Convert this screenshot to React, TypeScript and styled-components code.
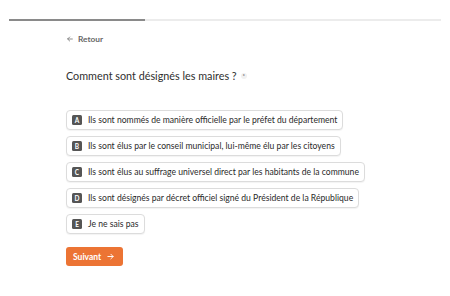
import React from "react";
import styled, { createGlobalStyle } from "styled-components";

const Global = createGlobalStyle`
  html, body { margin: 0; padding: 0; background: #fff; }
  body { font-family: Lato, "Open Sans", sans-serif; color: #333; }
`;

const Page = styled.div`
  width: 450px;
  height: 296px;
  padding-top: 19px;
  box-sizing: border-box;
`;

const Track = styled.div`
  margin: 0 9px;
  height: 2px;
  background: #ececec;
  display: flex;
`;

const Fill = styled.div`
  height: 100%;
  background: #8a8a8a;
`;

const Content = styled.div`
  padding-left: 66px;
  display: flex;
  flex-direction: column;
  align-items: flex-start;
`;

const Back = styled.div`
  margin-top: 13px;
  display: flex;
  align-items: center;
  gap: 4px;
  font-size: 8.3px;
  font-weight: 700;
  color: #666;
`;

const Question = styled.div`
  margin-top: 25px;
  font-size: 10.8px;
  color: #2f2f2f;
  display: flex;
  align-items: center;
  gap: 4px;
`;

const Required = styled.span`
  width: 6px;
  height: 6px;
  border-radius: 50%;
  background: #f1f1f1;
  display: inline-flex;
  align-items: center;
  justify-content: center;
  font-size: 6px;
  line-height: 1;
  color: #333;
`;

const Options = styled.div`
  margin-top: 28px;
  display: flex;
  flex-direction: column;
  align-items: flex-start;
  gap: 6px;
`;

const Option = styled.div`
  height: 20px;
  box-sizing: border-box;
  border: 1px solid #dcdcdc;
  border-radius: 4px;
  box-shadow: 0 1px 1px rgba(0, 0, 0, 0.05);
  display: flex;
  align-items: center;
  padding: 0 5px 0 5px;
  gap: 6px;
  font-size: 8.6px;
  color: #2a2a2a;
  background: #fff;
`;

const Key = styled.span`
  width: 10px;
  height: 10px;
  border-radius: 1.5px;
  background: #555;
  color: #fff;
  font-size: 6.5px;
  font-weight: 700;
  display: inline-flex;
  align-items: center;
  justify-content: center;
`;

const Next = styled.button`
  margin-top: 13px;
  height: 19px;
  padding: 0 8px 0 7px;
  border: none;
  border-radius: 3px;
  background: #ec7434;
  color: #fff;
  font-family: Lato, sans-serif;
  font-size: 8.5px;
  font-weight: 700;
  display: flex;
  align-items: center;
  gap: 5px;
`;

const options = [
  ["A", "Ils sont nommés de manière officielle par le préfet du département"],
  ["B", "Ils sont élus par le conseil municipal, lui-même élu par les citoyens"],
  ["C", "Ils sont élus au suffrage universel direct par les habitants de la commune"],
  ["D", "Ils sont désignés par décret officiel signé du Président de la République"],
  ["E", "Je ne sais pas"],
];

const Arrow = ({ color, size }: { color: string; size: number }) => (
  <svg width={size} height={size} viewBox="0 0 24 24" fill="none" stroke={color} strokeWidth={2.5} strokeLinecap="round" strokeLinejoin="round">
    <path d="M5 12h14M13 6l6 6-6 6" />
  </svg>
);

const BackArrow = () => (
  <svg width={8} height={8} viewBox="0 0 24 24" fill="none" stroke="#777" strokeWidth={2.5} strokeLinecap="round" strokeLinejoin="round">
    <path d="M19 12H5M11 6l-6 6 6 6" />
  </svg>
);

export default function App() {
  return (
    <Page>
      <Global />
      <Track>
        <Fill style={{ width: "31.5%" }} />
      </Track>
      <Content>
        <Back>
          <BackArrow />
          Retour
        </Back>
        <Question>
          Comment sont désignés les maires ?
          <Required>*</Required>
        </Question>
        <Options>
          {options.map(([k, t]) => (
            <Option key={k}>
              <Key>{k}</Key>
              {t}
            </Option>
          ))}
        </Options>
        <Next>
          Suivant
          <Arrow color="#fff" size={9} />
        </Next>
      </Content>
    </Page>
  );
}
